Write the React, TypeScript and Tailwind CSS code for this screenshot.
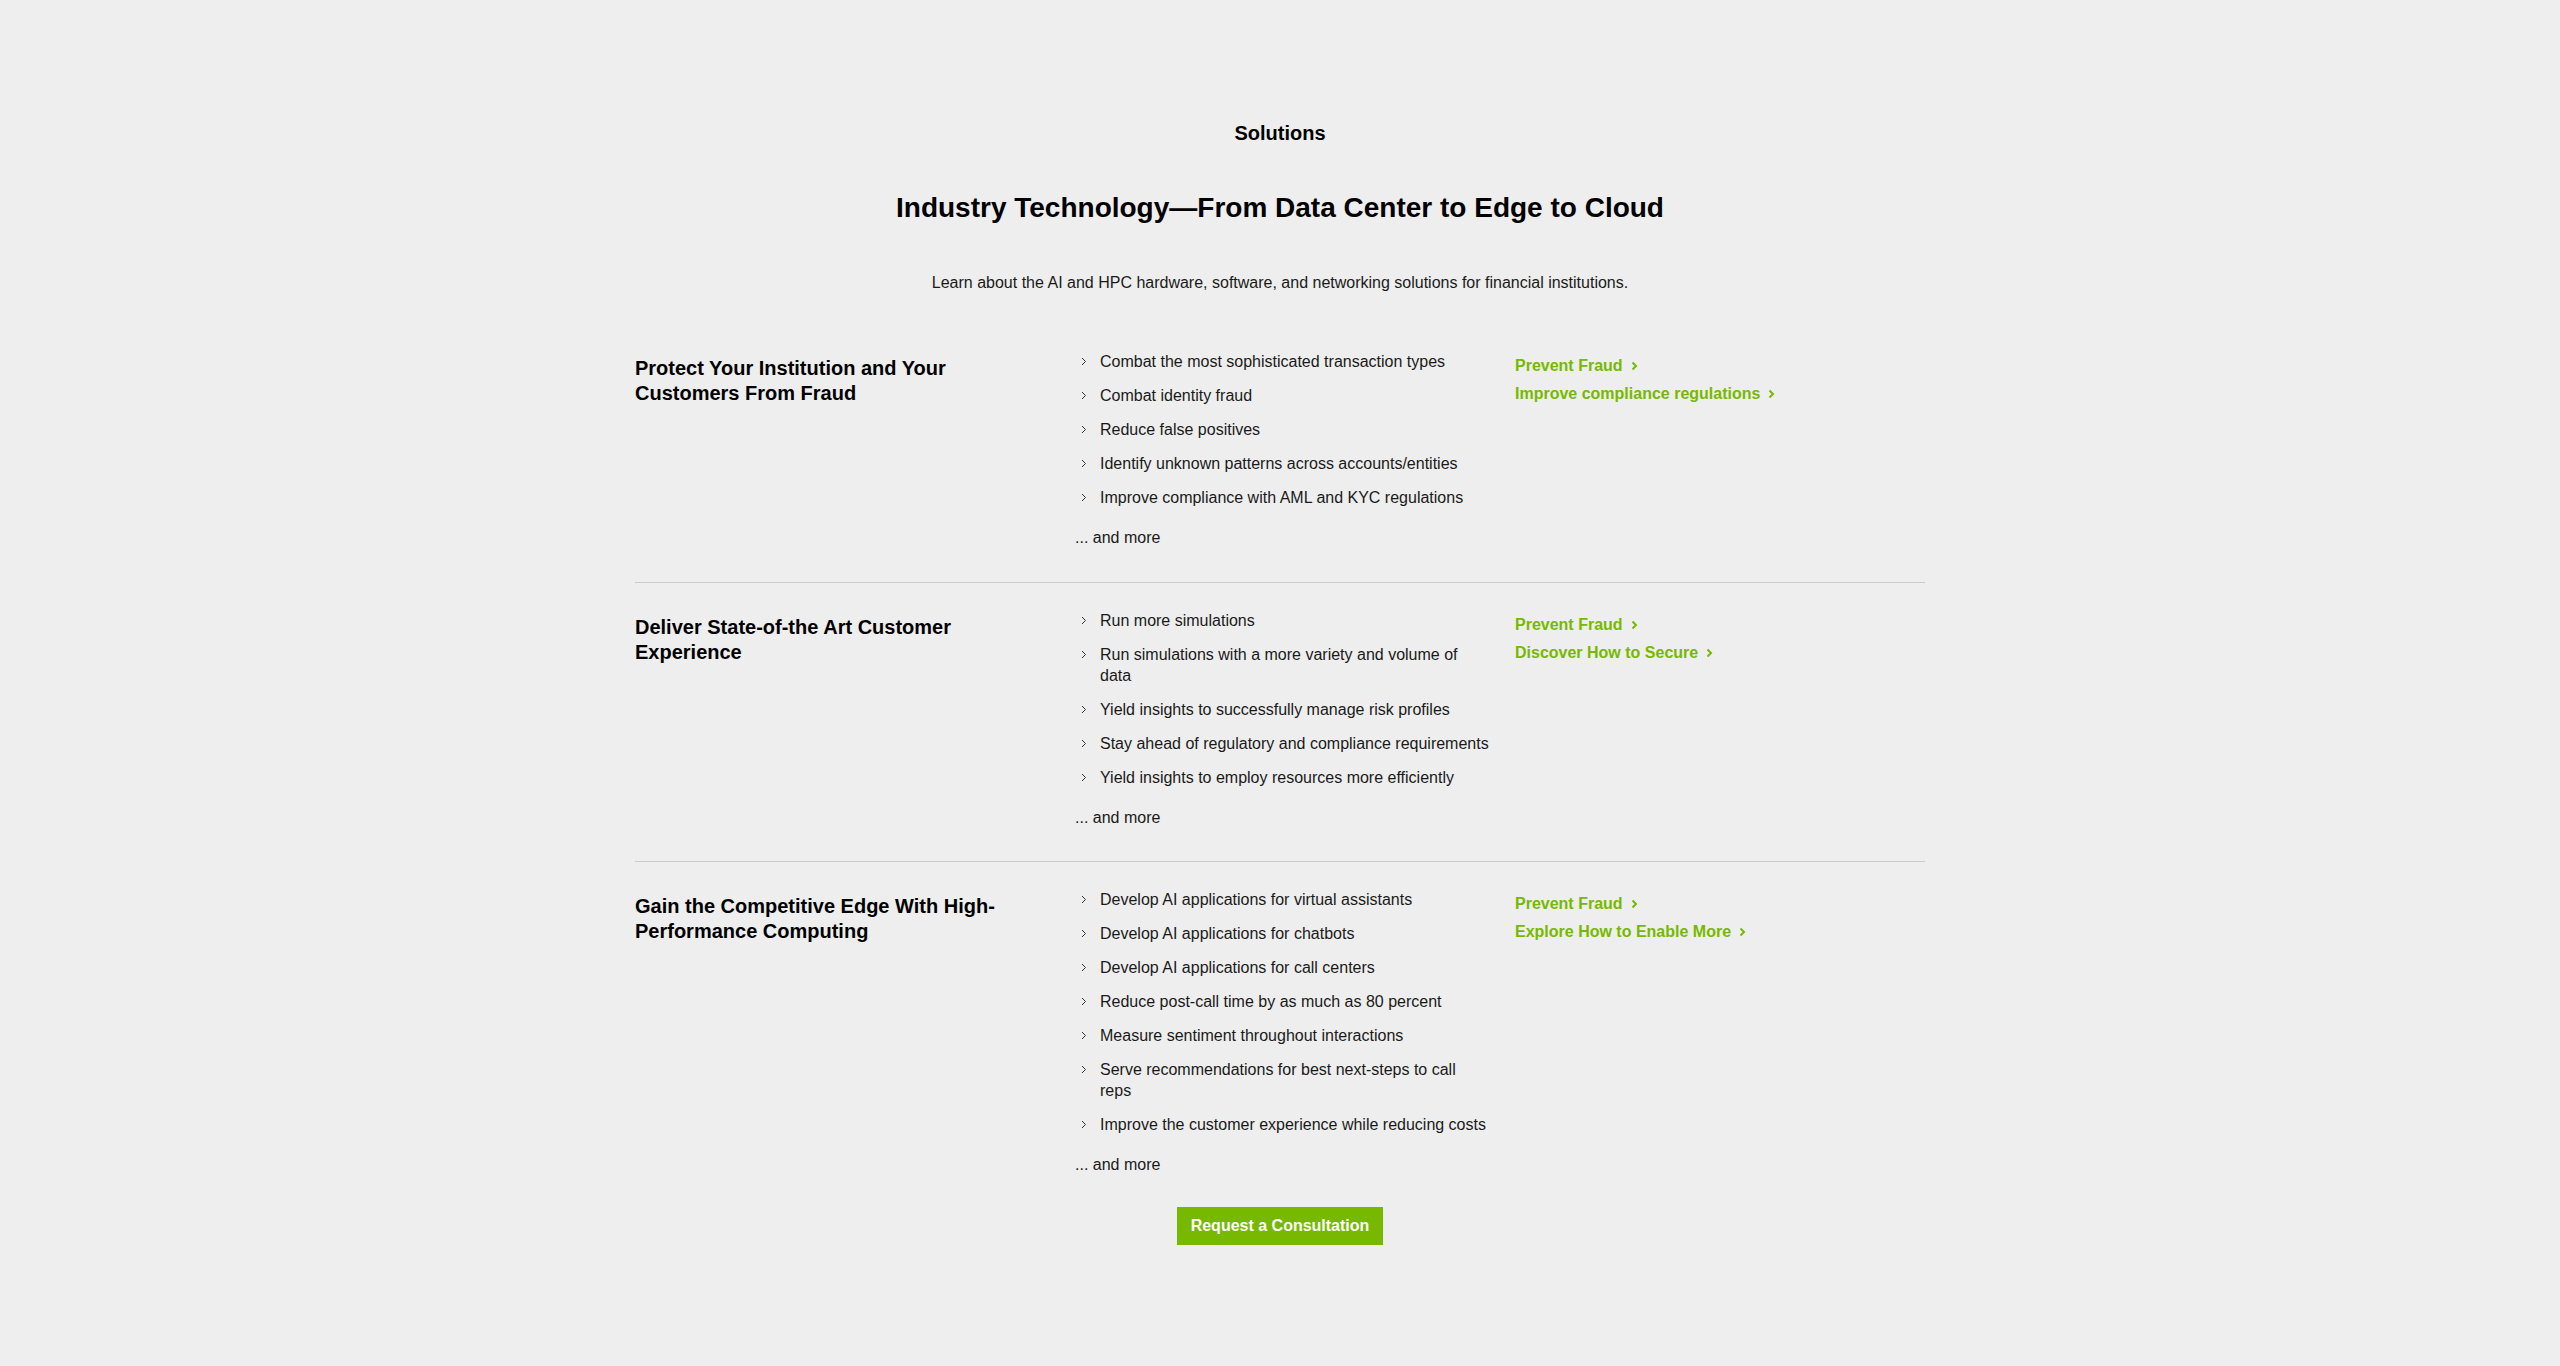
import React from "react";

type Row = { title: string; items: string[]; links: string[] };

const rows: Row[] = [
  {
    title: "Protect Your Institution and Your Customers From Fraud",
    items: [
      "Combat the most sophisticated transaction types",
      "Combat identity fraud",
      "Reduce false positives",
      "Identify unknown patterns across accounts/entities",
      "Improve compliance with AML and KYC regulations",
    ],
    links: ["Prevent Fraud", "Improve compliance regulations"],
  },
  {
    title: "Deliver State-of-the Art Customer Experience",
    items: [
      "Run more simulations",
      "Run simulations with a more variety and volume of data",
      "Yield insights to successfully manage risk profiles",
      "Stay ahead of regulatory and compliance requirements",
      "Yield insights to employ resources more efficiently",
    ],
    links: ["Prevent Fraud", "Discover How to Secure"],
  },
  {
    title: "Gain the Competitive Edge With High-Performance Computing",
    items: [
      "Develop AI applications for virtual assistants",
      "Develop AI applications for chatbots",
      "Develop AI applications for call centers",
      "Reduce post-call time by as much as 80 percent",
      "Measure sentiment throughout interactions",
      "Serve recommendations for best next-steps to call reps",
      "Improve the customer experience while reducing costs",
    ],
    links: ["Prevent Fraud", "Explore How to Enable More"],
  },
];

function SmallChevron() {
  return (
    <svg width="6" height="9" viewBox="0 0 6 9" className="block">
      <polyline points="1,1 4.5,4.5 1,8" fill="none" stroke="#333333" strokeWidth="1" />
    </svg>
  );
}

function LinkChevron() {
  return (
    <svg width="7" height="10" viewBox="0 0 7 10" className="block">
      <polyline points="1.5,1.5 5,5 1.5,8.5" fill="none" stroke="#76b900" strokeWidth="2" />
    </svg>
  );
}

export default function App() {
  return (
    <div
      className="min-h-[1366px] w-full bg-[#eeeeee] pt-[119px] pb-[120px] text-[#1a1a1a]"
      style={{ fontFamily: '"Liberation Sans", Arial, sans-serif' }}
    >
      <div className="mx-auto w-[1290px]">
        <div className="text-center text-[20px] font-bold leading-[28px] text-black">Solutions</div>
        <h2 className="mt-[43px] text-center text-[28px] font-bold leading-[36px] text-black">
          Industry Technology—From Data Center to Edge to Cloud
        </h2>
        <p className="mt-[45px] text-center text-[16px] leading-[24px] text-[#1a1a1a]">
          Learn about the AI and HPC hardware, software, and networking solutions for financial institutions.
        </p>

        <div className="mt-[57px]">
          {rows.map((row, i) => (
            <div
              key={i}
              className={
                i === 0
                  ? "grid grid-cols-3 gap-x-[30px] border-b border-[#cccccc] pb-[34px]"
                  : i === rows.length - 1
                  ? "grid grid-cols-3 gap-x-[30px] pt-[28px] pb-[32px]"
                  : "grid grid-cols-3 gap-x-[30px] border-b border-[#cccccc] pt-[28px] pb-[33px]"
              }
            >
              <h3 className="mt-[4px] pr-[20px] text-[20px] font-bold leading-[25px] text-black">{row.title}</h3>
              <div>
                <ul className="-mt-[1px] flex w-[416px] flex-col gap-[13px]">
                  {row.items.map((item, j) => (
                    <li key={j} className="flex text-[16px] leading-[21px]">
                      <span className="flex h-[21px] w-[25px] shrink-0 items-center pl-[6px]">
                        <SmallChevron />
                      </span>
                      <span>{item}</span>
                    </li>
                  ))}
                </ul>
                <div className="mt-[20px] text-[16px] leading-[20px]">... and more</div>
              </div>
              <div className="flex flex-col gap-[4px] pt-[2px]">
                {row.links.map((l, k) => (
                  <a
                    key={k}
                    href="#"
                    className="flex items-center gap-[8px] text-[16px] font-bold leading-[24px] text-[#76b900]"
                  >
                    <span>{l}</span>
                    <LinkChevron />
                  </a>
                ))}
              </div>
            </div>
          ))}
        </div>

        <div className="flex justify-center">
          <a
            href="#"
            className="flex h-[38px] items-center bg-[#76b900] px-[14px] text-[16px] font-bold text-white"
          >
            Request a Consultation
          </a>
        </div>
      </div>
    </div>
  );
}
